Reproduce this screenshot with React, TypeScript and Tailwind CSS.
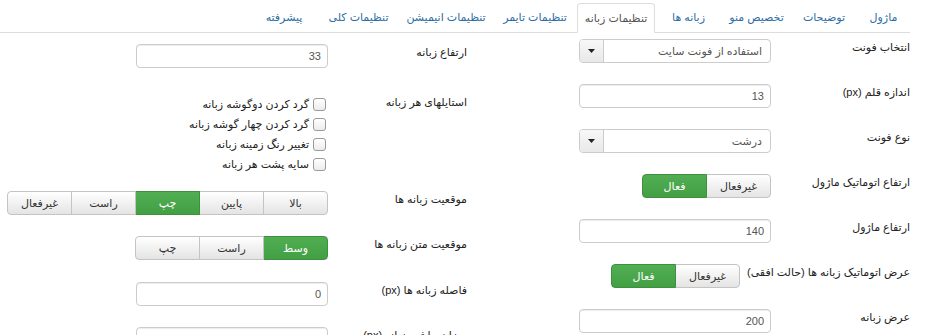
import React from "react";

const tabs = [
  { label: "ماژول", w: "w-[53px]" },
  { label: "توضیحات", w: "w-[62px]" },
  { label: "تخصیص منو", w: "w-[69px]" },
  { label: "زبانه ها", w: "w-[63px]" },
  { label: "تنظیمات زبانه", w: "w-[78px]", active: true },
  { label: "تنظیمات تایمر", w: "w-[80px]" },
  { label: "تنظیمات انیمیشن", w: "w-[94px]" },
  { label: "تنظیمات کلی", w: "w-[77px]" },
  { label: "پیشرفته", w: "w-[68px]" },
];

const btn =
  "flex h-[24px] w-[65px] items-center justify-center border border-[#c4c4c4] bg-gradient-to-b from-white to-[#e4e4e4] text-[#333] -ml-px first:rounded-r-[4px] last:rounded-l-[4px] last:ml-0";
const btnOn =
  "flex h-[24px] w-[65px] items-center justify-center border border-[#3e8f3e] bg-gradient-to-b from-[#52ae52] to-[#439f43] text-white -ml-px first:rounded-r-[4px] last:rounded-l-[4px] last:ml-0";

function Label({ children }: { children: React.ReactNode }) {
  return (
    <div className="min-w-[139px] shrink-0 whitespace-nowrap pl-[7px] pt-[1px] leading-[14px] text-[#222]">
      {children}
    </div>
  );
}

function TextInput({ value }: { value: string }) {
  return (
    <div className="flex h-[24px] w-[192px] items-center rounded-[4px] border border-[#ccc] bg-white px-[6px] text-[#555] shadow-[inset_0_1px_1px_rgba(0,0,0,0.075)]">
      {value}
    </div>
  );
}

function Select({ value }: { value: string }) {
  return (
    <div className="flex h-[24px] w-[192px] items-center overflow-hidden rounded-[4px] border border-[#ccc] bg-white text-[#555]">
      <div className="flex-1 px-[8px]">{value}</div>
      <div className="flex h-full w-[24px] items-center justify-center border-r border-[#ccc] bg-gradient-to-b from-[#f8f8f8] to-[#e8e8e8]">
        <svg width="7" height="4" viewBox="0 0 7 4">
          <path d="M0 0h7L3.5 4z" fill="#222" />
        </svg>
      </div>
    </div>
  );
}

function Toggle({ on }: { on: boolean }) {
  return (
    <div className="flex">
      <div className={on ? btn : btnOn}>غیرفعال</div>
      <div className={on ? btnOn : btn}>فعال</div>
    </div>
  );
}

function Check({ label }: { label: string }) {
  return (
    <div className="flex h-[20px] items-center gap-[4px] pr-[2px]">
      <span className="h-[13px] w-[13px] rounded-[3px] border border-[#9a9a9a] bg-gradient-to-b from-white to-[#ececec]" />
      <span className="text-[#222]">{label}</span>
    </div>
  );
}

export default function App() {
  return (
    <div
      dir="rtl"
      className="h-[335px] w-[928px] overflow-hidden bg-white pr-[18px] pt-[3px] text-[11px] [font-family:'Liberation_Sans','DejaVu_Sans',sans-serif]"
    >
      {/* Tabs */}
      <ul className="flex h-[30px] border-b border-[#ddd]">
        {tabs.map((t) => (
          <li key={t.label} className={`${t.w} ml-[2px] shrink-0`}>
            {t.active ? (
              <div className="-mb-px flex h-[30px] items-center justify-center rounded-t-[4px] border border-[#ddd] border-b-white bg-white text-[#555]">
                {t.label}
              </div>
            ) : (
              <div className="flex h-[29px] items-center justify-center text-[#2e6da4]">
                {t.label}
              </div>
            )}
          </li>
        ))}
      </ul>

      <div className="flex">
        {/* Right column */}
        <div className="flex w-[440px] shrink-0 flex-col gap-[21px] pt-[6px]">
          <div className="flex">
            <Label>انتخاب فونت</Label>
            <Select value="استفاده از فونت سایت" />
          </div>
          <div className="flex">
            <Label>اندازه قلم (px)</Label>
            <TextInput value="13" />
          </div>
          <div className="flex">
            <Label>نوع فونت</Label>
            <Select value="درشت" />
          </div>
          <div className="flex">
            <Label>ارتفاع اتوماتیک ماژول</Label>
            <Toggle on />
          </div>
          <div className="flex">
            <Label>ارتفاع ماژول</Label>
            <TextInput value="140" />
          </div>
          <div className="flex">
            <Label>عرض اتوماتیک زبانه ها (حالت افقی)</Label>
            <Toggle on />
          </div>
          <div className="flex">
            <Label>عرض زبانه</Label>
            <TextInput value="200" />
          </div>
        </div>

        {/* Left column */}
        <div className="flex flex-1 flex-col pr-[3px] pt-[11px]">
          <div className="flex">
            <Label>ارتفاع زبانه</Label>
            <TextInput value="33" />
          </div>
          <div className="mt-[26px] flex">
            <Label>استایلهای هر زبانه</Label>
            <div className="flex flex-col">
              <Check label="گرد کردن دوگوشه زبانه" />
              <Check label="گرد کردن چهار گوشه زبانه" />
              <Check label="تغییر رنگ زمینه زبانه" />
              <Check label="سایه پشت هر زبانه" />
            </div>
          </div>
          <div className="mt-[17px] flex">
            <Label>موقعیت زبانه ها</Label>
            <div className="flex">
              <div className={btn}>بالا</div>
              <div className={btn}>پایین</div>
              <div className={btnOn}>چپ</div>
              <div className={btn}>راست</div>
              <div className={btn}>غیرفعال</div>
            </div>
          </div>
          <div className="mt-[21px] flex">
            <Label>موقعیت متن زبانه ها</Label>
            <div className="flex">
              <div className={btnOn}>وسط</div>
              <div className={btn}>راست</div>
              <div className={btn}>چپ</div>
            </div>
          </div>
          <div className="mt-[22px] flex">
            <Label>فاصله زبانه ها (px)</Label>
            <TextInput value="0" />
          </div>
          <div className="mt-[21px] flex">
            <Label>میزان حاشیه زبانه (px)</Label>
            <TextInput value="" />
          </div>
        </div>
      </div>
    </div>
  );
}
